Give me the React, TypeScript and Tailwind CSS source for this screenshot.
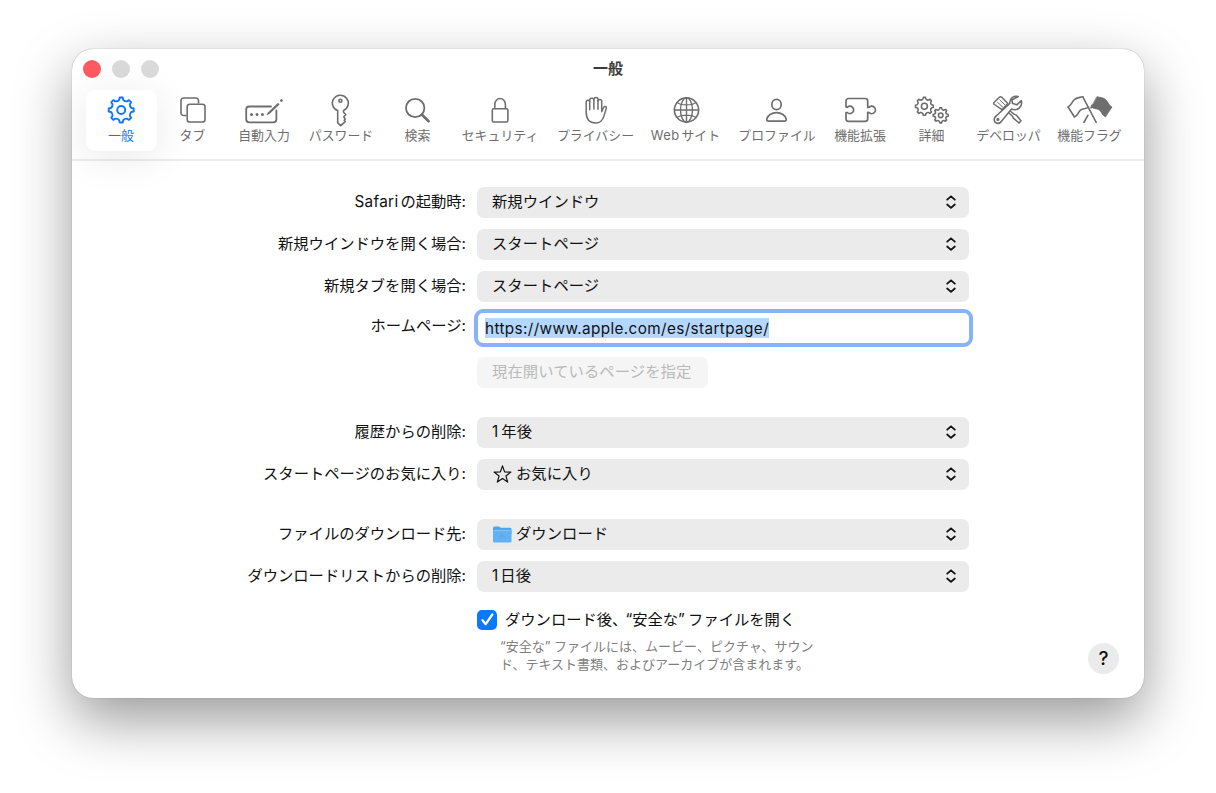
import type { ReactNode } from 'react';
import clsx from 'clsx';

// Builds a closed gear outline with rounded teeth
function gearPath(cx: number, cy: number, outer: number, inner: number, teeth: number) {
  const step = (Math.PI * 2) / teeth;
  const point = (r: number, a: number) => `${(cx + r * Math.sin(a)).toFixed(2)} ${(cy - r * Math.cos(a)).toFixed(2)}`;
  let d = '';
  for (let i = 0; i < teeth; i++) {
    const a = i * step;
    d += `${i === 0 ? 'M' : 'L'}${point(outer, a - step * 0.15)}`;
    d += `L${point(outer, a + step * 0.15)}`;
    d += `L${point(inner + 0.4, a + step * 0.25)}`;
    d += `Q${point(inner - 0.9, a + step * 0.5)} ${point(inner + 0.4, a + step * 0.75)}`;
  }
  return d + 'Z';
}

function Glyph({ width, children }: { width: number; children: ReactNode }) {
  return (
    <svg
      width={width}
      height={34}
      viewBox={`0 0 ${width} 34`}
      fill="none"
      stroke="currentColor"
      strokeWidth={1.6}
      strokeLinecap="round"
      strokeLinejoin="round"
      className="shrink-0"
    >
      {children}
    </svg>
  );
}

const GearIcon = () => (
  <Glyph width={30}>
    <path d={gearPath(15.2, 17, 12.6, 10, 8)} strokeWidth={1.9} />
    <circle cx="15.2" cy="17" r="4" strokeWidth={1.9} />
  </Glyph>
);

const TabsIcon = () => (
  <Glyph width={28}>
    <path d="M7 22.5H4.600A2.600 2.600 0 0 1 2 19.900V7.600A2.600 2.600 0 0 1 4.600 5h12.300a2.600 2.600 0 0 1 2.600 2.600V10" />
    <rect x="8.200" y="11.200" width="17.800" height="17.800" rx="2.600" />
  </Glyph>
);

const AutofillIcon = () => (
  <Glyph width={40}>
    <path d="M27 13.500H5.200a3 3 0 0 0-3 3v9.800a3 3 0 0 0 3 3h24.200a3 3 0 0 0 3-3V17.500" strokeWidth={1.800} />
    <path d="M23.200 21.600l1.300-2.400L34 10.200l1.200 1.200-9.500 9z" fill="currentColor" strokeWidth={0.7} />
    <path d="M37.300 7.700l.2-.2" strokeWidth={2.600} />
    <path d="M7.500 21.400h.01M13 21.400h.01M18.400 21.400h.01" strokeWidth={3} />
  </Glyph>
);

const KeyIcon = () => (
  <Glyph width={24}>
    <path d="M8.700 17.600a8 7.900 0 1 1 5.800-.2v1.800l2.300 2.300-2 2.300 1.400 2.300-1 1.300 1 1.200-4.400 4.100L8.700 29.900z" />
    <circle cx="11.400" cy="7.800" r="1.500" />
  </Glyph>
);

const SearchIcon = () => (
  <Glyph width={28}>
    <circle cx="11.200" cy="15" r="9.200" strokeWidth={1.800} />
    <path d="M18 21.800l6.600 6.500" strokeWidth={2.600} />
  </Glyph>
);

const LockIcon = () => (
  <Glyph width={24}>
    <rect x="4.300" y="15.700" width="15.600" height="13.300" rx="1.500" />
    <path d="M6.800 15.500V11.300a5.200 5.700 0 0 1 10.600 0v4.200" />
  </Glyph>
);

const HandIcon = () => (
  <Glyph width={24}>
    <path
      d="M2.200 19V9.100c0-2.400 3.500-2.400 3.500 0V7c0-2.400 4.200-2.400 4.200 0V6.300c0-2.500 4.100-2.500 4.100 0v2c0-2.400 3.700-2.400 3.700 0v10.500l1.700-4c.9-2.300 3.400-1.400 2.900.5l-2.300 7.600c-1.300 4.600-3.900 7.100-8.400 7.100-6 0-9.400-3.600-9.400-11z"
      strokeWidth={1.500}
    />
    <path d="M5.700 8.500v8.200M9.900 7v9M14 7.500v8.700" strokeWidth={1.500} />
  </Glyph>
);

const GlobeIcon = () => (
  <Glyph width={28}>
    <circle cx="14.500" cy="17" r="12.100" strokeWidth={1.600} />
    <ellipse cx="14.500" cy="17" rx="6" ry="12.100" strokeWidth={1.400} />
    <path d="M14.500 5v24M2.500 17h24M5 9.500c4.500 3.200 14.500 3.200 19 0M5 24.500c4.500-3.200 14.500-3.200 19 0" strokeWidth={1.400} />
  </Glyph>
);

const ProfileIcon = () => (
  <Glyph width={28}>
    <ellipse cx="13.500" cy="11.500" rx="4.700" ry="5.100" strokeWidth={1.700} />
    <path d="M5.500 28.200c-1.400 0-2-.9-1.700-2.200.8-3.400 4.700-6.300 9.700-6.300s8.900 2.900 9.700 6.300c.3 1.300-.3 2.200-1.700 2.200z" strokeWidth={1.700} />
  </Glyph>
);

const PuzzleIcon = () => (
  <Glyph width={34}>
    <path
      d="M3 14V8a2.500 2.500 0 0 1 2.500-2.500h16.700A2.500 2.500 0 0 1 24.700 8v6.500l1.500-.3a3.700 3.700 0 1 1 0 5.400l-1.500-.3v6.500a2.500 2.500 0 0 1-2.500 2.500H5.500A2.500 2.500 0 0 1 3 25.800V19.700l1.300-.2a3.700 3.700 0 1 0 0-5.200z"
      strokeWidth={1.700}
    />
  </Glyph>
);

const AdvancedIcon = () => (
  <Glyph width={38}>
    <path d={gearPath(11.4, 13.3, 9, 7.200, 8)} strokeWidth={1.600} />
    <circle cx="11.400" cy="13.300" r="3" strokeWidth={1.600} />
    <path d={gearPath(27.7, 22.3, 7.600, 6, 8)} strokeWidth={1.600} />
    <circle cx="27.700" cy="22.300" r="2.300" strokeWidth={1.600} />
  </Glyph>
);

const DeveloperIcon = () => (
  <Glyph width={34}>
    {/* screwdriver */}
    <path d="M2.300 9.300l5-5c.8-.8 1.700-.8 2.500 0l6 6.200-5.800 6.200-7.600-5.200c-.9-.7-.9-1.500-.1-2.200z" strokeWidth={1.500} />
    <path d="M5.500 9.200l5.300 5M7.800 7l5.300 5" strokeWidth={1} />
    <path d="M18.500 18.200l3.800 3.200 2 .7 4.700 5.700-2 2.100-5.700-4.800-.8-1.900-3.500-3.200" strokeWidth={1.500} />
    {/* wrench */}
    <path
      d="M26.200 3.600c-4.300-1.300-9 1.500-8.400 6.800L4.200 23c-3.300 2.200-2.400 7.100 1.600 7.400 1.800.1 2.900-.8 3.900-2.400l9.800-11.900c5.700 2.100 11.500-2.100 9.800-8.600l-4.500 4.300-4.200-1.300-.8-3.500z"
      fill="white"
      strokeWidth={1.600}
    />
    <circle cx="5.900" cy="26.400" r=".8" fill="currentColor" />
  </Glyph>
);

const FlagsIcon = () => (
  <Glyph width={48}>
    <path d="M16.800 3.800C13 4.800 10.500 4.300 8 7S5 12.500 2 14l6.500 10c3.500-1.200 3.500-4.700 6-6.800s5 -.7 8-3" strokeWidth={1.600} />
    <path d="M16.800 3.800L30.200 29.300M21.900 22.300l-4 7.200M25 14.800l1.200-2.600" strokeWidth={1.600} />
    <path
      d="M31.200 3.800C35 4.800 37.500 4.300 40 7s3 5.500 6 7l-6.500 9.800c-3.500-1.200-3.500-4.500-6-6.600s-5-.7-8-3z"
      fill="currentColor"
      strokeWidth={0.800}
    />
  </Glyph>
);

const tabs = [
  { label: '一般', icon: <GearIcon />, width: 'w-[71.5px]', active: true },
  { label: 'タブ', icon: <TabsIcon />, width: 'w-[71.5px]' },
  { label: '自動入力', icon: <AutofillIcon />, width: 'w-[71.5px]' },
  { label: 'パスワード', icon: <KeyIcon />, width: 'w-[82.5px]' },
  { label: '検索', icon: <SearchIcon />, width: 'w-[70.5px]' },
  { label: 'セキュリティ', icon: <LockIcon />, width: 'w-[94.5px]' },
  { label: 'プライバシー', icon: <HandIcon />, width: 'w-[96.5px]' },
  { label: <><span className="mr-[2px] tracking-[0.4px]">Web</span>サイト</>, icon: <GlobeIcon />, width: 'w-[83.5px]' },
  { label: 'プロファイル', icon: <ProfileIcon />, width: 'w-[99.5px]' },
  { label: '機能拡張', icon: <PuzzleIcon />, width: 'w-[66.5px]' },
  { label: '詳細', icon: <AdvancedIcon />, width: 'w-[76.5px]' },
  { label: 'デベロッパ', icon: <DeveloperIcon />, width: 'w-[77.5px]' },
  { label: '機能フラグ', icon: <FlagsIcon />, width: 'w-[84.5px]' },
];

function Row({ label, children, className }: { label?: ReactNode; children: ReactNode; className?: string }) {
  return (
    <div className={clsx('flex h-[30px] items-center gap-[11px]', className)}>
      <div className="w-[394px] shrink-0 text-right whitespace-nowrap">{label}</div>
      {children}
    </div>
  );
}

function Select({ icon, children }: { icon?: ReactNode; children: ReactNode }) {
  return (
    <button className="flex h-[31px] w-[492px] items-center rounded-[7px] bg-[#ebebeb] pr-3 pl-[15px] text-left">
      {icon}
      <span className="flex-1 whitespace-nowrap tracking-[0.05px]">{children}</span>
      <svg width="12" height="16" viewBox="0 0 12 16" fill="none" stroke="currentColor" strokeWidth="1.8" strokeLinecap="round" strokeLinejoin="round">
        <path d="M2.200 5.700L6 2.300l3.800 3.400M2.200 10.500l3.800 3.400 3.800-3.400" />
      </svg>
    </button>
  );
}

const StarIcon = () => (
  <svg width="20" height="19" viewBox="0 0 20 19" fill="none" stroke="currentColor" strokeWidth="1.2" strokeLinejoin="round" className="mr-1">
    <path d="M10.500 .9l2.100 6 6.300.2-5 3.800 1.800 6.200-5.200-3.700-5.200 3.700 1.800-6.200-5-3.800 6.300-.2z" />
  </svg>
);

const FolderIcon = () => (
  <svg width="20" height="17" viewBox="0 0 20 17" className="mr-1">
    <path d="M1 2A1.500 1.500 0 0 1 2.500.5H7l1.700 1.200h9.500A1.300 1.300 0 0 1 19.500 3V8H1z" fill="#4fa5ea" />
    <rect x="1" y="4" width="18.500" height="12.500" rx="1.300" fill="#62b1f2" />
    <path d="M2 4.500h16.500" stroke="#8ccaf8" strokeWidth=".8" />
    <path d="M7.300 11.500a2.800 2.800 0 0 1 5.400 0M10 8.800v3.600" stroke="#5fa3e0" strokeWidth=".9" fill="none" />
  </svg>
);

export default function App() {
  return (
    <div className="h-[793px] w-[1216px] overflow-hidden bg-white px-[72px] pt-[49px] font-['Inter','Noto_Sans_CJK_JP',sans-serif] text-[15.3px] leading-5 text-[#111]">
      <div className="flex h-[649px] w-[1072px] flex-col overflow-hidden rounded-[21px] bg-white shadow-[0_22px_56px_rgba(0,0,0,0.4),0_0_1px_rgba(0,0,0,0.45)]">
        {/* Title bar and toolbar */}
        <header className="h-[112px] shrink-0 border-b-2 border-[#ececec]">
          <div className="grid h-10 grid-cols-3 items-center px-[11px]">
            <div className="flex gap-[11px]">
              <span className="size-[18px] rounded-full bg-[#ff5a5f]" />
              <span className="size-[18px] rounded-full bg-[#dadada]" />
              <span className="size-[18px] rounded-full bg-[#dadada]" />
            </div>
            <h1 className="text-center text-[15px] font-bold text-[#3c3c3c]">一般</h1>
          </div>
          <nav className="ml-[13.25px] flex pt-px text-[12.9px] text-[#6e6e6e]">
            {tabs.map((tab, i) => (
              <div key={i} className={clsx('flex shrink-0 justify-center', tab.width)}>
                <button
                  className={clsx(
                    'flex h-[61px] w-[71px] flex-col items-center rounded-[9px] pt-[3px] whitespace-nowrap',
                    tab.active && 'bg-white text-[#0a78ff] shadow-[0_6px_40px_rgba(0,0,0,0.09)]'
                  )}
                >
                  {tab.icon}
                  <span className="leading-[18px]">{tab.label}</span>
                </button>
              </div>
            ))}
          </nav>
        </header>

        {/* Settings form */}
        <main className="flex flex-1 flex-col pt-[26px]">
          <div className="flex flex-col gap-3">
            <Row label={<><span className="mr-[2px] tracking-[0.3px]">Safari</span>の起動時:</>}>
              <Select>新規ウインドウ</Select>
            </Row>
            <Row label="新規ウインドウを開く場合:">
              <Select>スタートページ</Select>
            </Row>
            <Row label="新規タブを開く場合:">
              <Select>スタートページ</Select>
            </Row>
          </div>
          <Row label={<span className="relative -top-[2px]">ホームページ:</span>} className="mt-3">
            <div className="-ml-[3px] flex h-[38px] w-[499px] shrink-0 items-center rounded-[9px] border-4 border-[#8ab2fa] bg-white pl-[7px]">
              <span className="bg-[#b3d7ff] pt-px leading-[19px] tracking-[0.38px]">https://www.apple.com/es/startpage/</span>
            </div>
          </Row>
          <Row className="mt-[14px]">
            <button className="h-[31px] w-[231px] rounded-[7px] bg-[#f5f5f5] pl-[15px] text-left tracking-[0.1px] whitespace-nowrap text-[#b9b9b9]">
              現在開いているページを指定
            </button>
          </Row>
          <div className="mt-[30px] flex flex-col gap-3">
            <Row label="履歴からの削除:">
              <Select><span className="mr-[3px]">1</span>年後</Select>
            </Row>
            <Row label="スタートページのお気に入り:">
              <Select icon={<StarIcon />}>お気に入り</Select>
            </Row>
          </div>
          <div className="mt-[30px] flex flex-col gap-3">
            <Row label="ファイルのダウンロード先:">
              <Select icon={<FolderIcon />}>ダウンロード</Select>
            </Row>
            <Row label="ダウンロードリストからの削除:">
              <Select><span className="mr-[2px]">1</span>日後</Select>
            </Row>
          </div>

          <div className="flex justify-between pt-[18px] pr-[25px] pl-[405px]">
            <div>
              <div className="flex items-center gap-2">
                <span className="flex size-5 items-center justify-center rounded-[5px] bg-[#0a78ff]">
                  <svg width="13" height="13" viewBox="0 0 13 13" fill="none" stroke="white" strokeWidth="2.3" strokeLinecap="round" strokeLinejoin="round">
                    <path d="M1.500 7.200l3.200 4L11.300 1.500" />
                  </svg>
                </span>
                <span className="pt-px whitespace-nowrap">
                  ダウンロード後、<span className="-ml-[2px]">“</span>安全な<span className="-mr-px">”</span> ファイルを開く
                </span>
              </div>
              <p className="mt-[7px] pl-[23px] text-[13px] leading-[18px] whitespace-nowrap text-[#808080]">
                “安全な” ファイルには、ムービー、ピクチャ、サウン
                <br />
                ド、テキスト書類、およびアーカイブが含まれます。
              </p>
            </div>
            <button className="mt-[34px] flex size-[31px] items-center justify-center rounded-full bg-[#ebebeb] text-[19px] font-medium">
              ?
            </button>
          </div>
        </main>
      </div>
    </div>
  );
}
